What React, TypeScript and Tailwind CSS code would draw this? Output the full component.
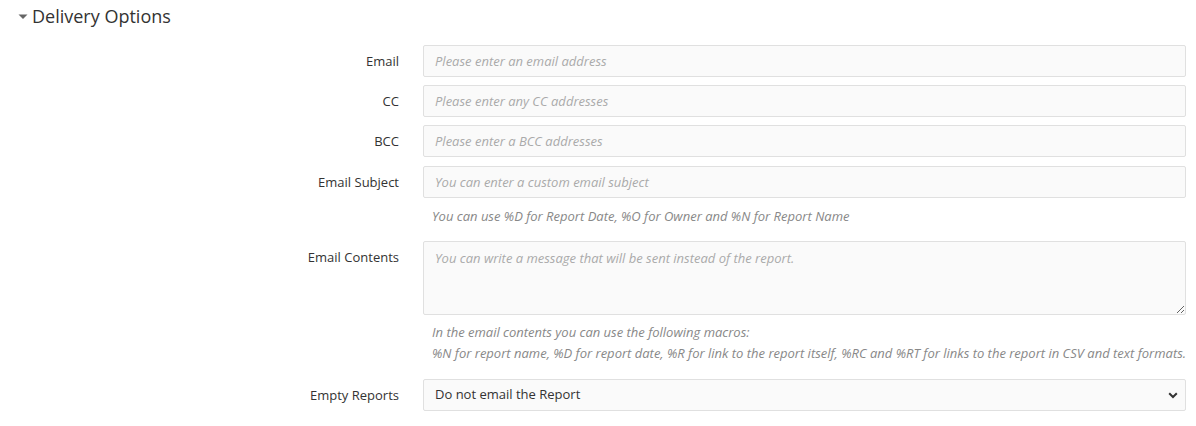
import React from "react";

const font = { fontFamily: '"Open Sans", "Noto Sans", sans-serif' };

function Label({ children, top = "pt-[7px]" }: { children: React.ReactNode; top?: string }) {
  return (
    <div className={`text-right text-[13px] leading-[18px] text-[#333] pr-[1px] ${top}`}>{children}</div>
  );
}

function Input({ placeholder }: { placeholder: string }) {
  return (
    <input
      className="h-[32px] w-full rounded-[2px] border border-[#e0e0e0] bg-[#fafafa] px-[11px] text-[13px] text-[#333] outline-none placeholder:italic placeholder:text-[#aaa]"
      placeholder={placeholder}
    />
  );
}

export default function App() {
  return (
    <div className="w-[1196px] h-[426px] bg-white" style={font}>
      <div className="flex items-center pl-[18px] pt-[7px] h-[25px]">
        <svg width="10" height="6" viewBox="0 0 10 6" className="mr-[4px] mt-[1px]">
          <path d="M0.5 0.5 L9.5 0.5 L5 5 Z" fill="#666" />
        </svg>
        <span className="text-[18px] leading-[24px] text-[#333]">Delivery Options</span>
      </div>

      <div className="grid grid-cols-[400px_1fr] gap-x-[23px] pr-[10px] mt-[20px]">
        <Label>Email</Label>
        <Input placeholder="Please enter an email address" />

        <div className="col-span-2 h-[8px]" />
        <Label>CC</Label>
        <Input placeholder="Please enter any CC addresses" />

        <div className="col-span-2 h-[8px]" />
        <Label>BCC</Label>
        <Input placeholder="Please enter a BCC addresses" />

        <div className="col-span-2 h-[9px]" />
        <Label>Email Subject</Label>
        <Input placeholder="You can enter a custom email subject" />

        <div />
        <div className="pl-[9px] pt-[8px] pb-[15px] text-[13px] leading-[20px] italic text-[#888]">
          You can use %D for Report Date, %O for Owner and %N for Report Name
        </div>

        <Label top="pt-[7px]">Email Contents</Label>
        <textarea
          className="block h-[74px] w-full rounded-[2px] border border-[#e0e0e0] bg-[#fafafa] px-[11px] py-[6px] text-[13px] leading-[20px] text-[#333] outline-none placeholder:italic placeholder:text-[#aaa]"
          placeholder="You can write a message that will be sent instead of the report."
        />

        <div />
        <div className="pl-[9px] pt-[7px] pb-[15px] text-[13px] leading-[21px] italic text-[#888]">
          <div>In the email contents you can use the following macros:</div>
          <div className="whitespace-nowrap">
            %N for report name, %D for report date, %R for link to the report itself, %RC and %RT for links to the report in CSV and text formats.
          </div>
        </div>

        <Label>Empty Reports</Label>
        <div className="relative">
          <select
            className="h-[32px] w-full appearance-none rounded-[2px] border border-[#e0e0e0] bg-[#fafafa] px-[11px] text-[13px] text-[#333] outline-none"
            defaultValue="no"
          >
            <option value="no">Do not email the Report</option>
          </select>
          <svg
            width="10"
            height="7"
            viewBox="0 0 10 7"
            className="pointer-events-none absolute right-[8px] top-[13px]"
          >
            <path d="M1.2 1.2 L5 5 L8.8 1.2" fill="none" stroke="#333" strokeWidth="2" />
          </svg>
        </div>
      </div>
    </div>
  );
}
